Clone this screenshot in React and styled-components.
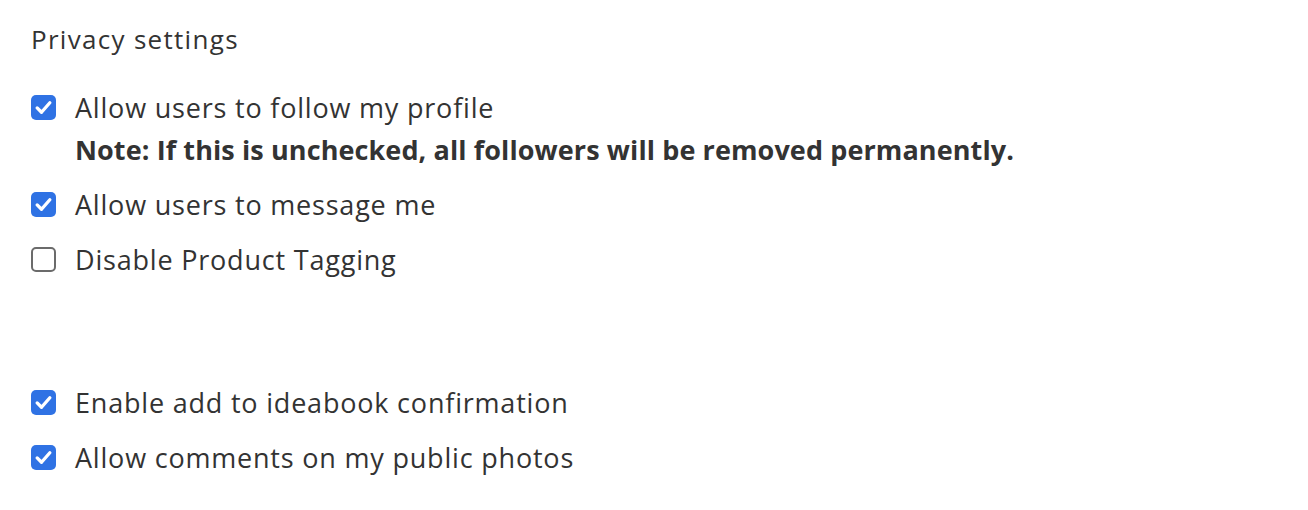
import React from 'react';
import styled, { createGlobalStyle } from 'styled-components';

const GlobalStyle = createGlobalStyle`
  body {
    margin: 0;
    background: #ffffff;
    font-family: "Open Sans", "Lato", sans-serif;
    color: #333333;
  }
`;

const Panel = styled.section`
  padding: 23px 31px;
  display: flex;
  flex-direction: column;
`;

const Heading = styled.h2`
  margin: 0 0 36px;
  font-size: 26px;
  font-weight: 400;
  letter-spacing: 1.3px;
  line-height: 32px;
  color: #333333;
`;

const Group = styled.div`
  display: flex;
  flex-direction: column;
  gap: 22px;
  margin-bottom: ${props => props.spaced ? '110px' : '0'};
`;

const Row = styled.label`
  display: grid;
  grid-template-columns: 25px 1fr;
  column-gap: 19px;
  align-items: center;
  cursor: pointer;
`;

const Box = styled.span`
  width: 25px;
  height: 25px;
  box-sizing: border-box;
  border-radius: 5px;
  display: flex;
  align-items: center;
  justify-content: center;
  background: ${props => props.checked ? '#2f72e4' : '#ffffff'};
  border: ${props => props.checked ? 'none' : '2px solid #6b6b6b'};
`;

const Label = styled.span`
  font-size: 27px;
  letter-spacing: 0.8px;
  line-height: 33px;
  color: #333333;
`;

const Note = styled.div`
  grid-column: 2;
  font-size: 27px;
  font-weight: 700;
  letter-spacing: 0.1px;
  line-height: 33px;
  margin-top: 9px;
  color: #333333;
`;

const Check = () => (
  <svg width="19" height="19" viewBox="0 0 24 24" fill="none">
    <path d="M4 12.5 L9.5 18 L20 6" stroke="#ffffff" strokeWidth="4.2" strokeLinecap="round" strokeLinejoin="round" />
  </svg>
);

const Option = ({ checked, label, note }) => (
  <Row>
    <Box checked={checked}>{checked && <Check />}</Box>
    <Label>{label}</Label>
    {note && <Note>{note}</Note>}
  </Row>
);

export default function App() {
  return (
    <>
      <GlobalStyle />
      <Panel>
        <Heading>Privacy settings</Heading>
        <Group spaced>
          <Option
            checked
            label="Allow users to follow my profile"
            note="Note: If this is unchecked, all followers will be removed permanently."
          />
          <Option checked label="Allow users to message me" />
          <Option label="Disable Product Tagging" />
        </Group>
        <Group>
          <Option checked label="Enable add to ideabook confirmation" />
          <Option checked label="Allow comments on my public photos" />
        </Group>
      </Panel>
    </>
  );
}
